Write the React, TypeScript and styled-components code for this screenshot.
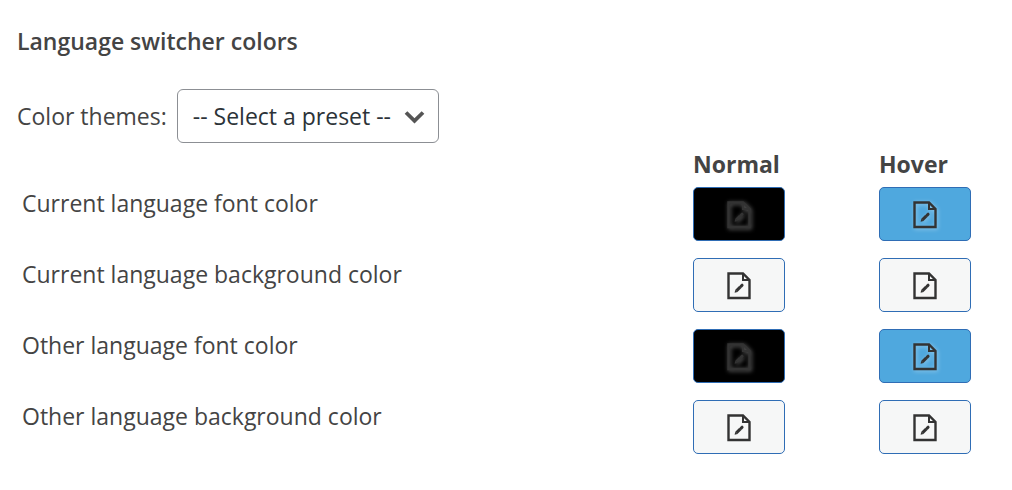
import React from 'react';
import styled, { createGlobalStyle } from 'styled-components';

const GlobalStyle = createGlobalStyle`
  *, *::before, *::after { box-sizing: border-box; }
  body {
    margin: 0;
    background: #fff;
    color: #444;
    font-family: "Open Sans", "Noto Sans", sans-serif;
    font-size: 23px;
    line-height: 32px;
  }
`;

const Panel = styled.section`
  padding: 25px 0 24px 17px;
`;

const Title = styled.h2`
  margin: 0 0 32px;
  font-size: 23px;
  font-weight: 600;
  line-height: 32px;
`;

const PresetRow = styled.div`
  display: flex;
  align-items: center;
  gap: 10px;
`;

const SelectWrap = styled.div`
  position: relative;
`;

const Select = styled.select`
  display: block;
  height: 54px;
  width: 262px;
  padding: 0 40px 0 15px;
  appearance: none;
  border: 1px solid #8c8f94;
  border-radius: 6px;
  background: #fff;
  color: #2c3338;
  font: inherit;
`;

const Chevron = styled.svg`
  position: absolute;
  top: 21px;
  right: 14px;
  pointer-events: none;
`;

const ColorTable = styled.table`
  width: 100%;
  table-layout: fixed;
  border-collapse: collapse;
`;

const HeadCell = styled.th<{ $width?: number }>`
  height: 44px;
  width: ${(p) => (p.$width ? `${p.$width}px` : 'auto')};
  padding: 5px 5px 7px;
  text-align: left;
  vertical-align: bottom;
  font-weight: 700;
`;

const RowLabel = styled.th`
  height: 71px;
  padding: 0 5px;
  vertical-align: top;
  text-align: left;
  font-weight: 400;
`;

const Cell = styled.td`
  padding: 0 5px;
  vertical-align: top;
`;

const Swatch = styled.button<{ $color: string }>`
  display: flex;
  align-items: center;
  justify-content: center;
  width: 92px;
  height: 54px;
  padding: 2px 0 0;
  border: 1px solid #2f6db5;
  border-radius: 5px;
  background: ${(p) => p.$color};
  cursor: pointer;

  svg {
    filter: drop-shadow(1px 1px 2px rgba(255, 255, 255, 0.4));
  }
`;

const EditIcon = () => (
  <svg width="24" height="28" viewBox="0 0 24 28" fill="none" aria-hidden="true">
    <path d="M1.5 1.5H16L22.5 8V26H1.5Z" stroke="#333" strokeWidth="2.4" />
    <path d="M16 1.5V8H22.5" stroke="#333" strokeWidth="2" />
    <path d="M9.4 18.9L13.4 14.9" stroke="#333" strokeWidth="3" />
    <path d="M14.2 14.1L15.1 13.2" stroke="#333" strokeWidth="3" strokeLinecap="round" />
    <path d="M7.6 20.7L8.3 17.7L10.6 20Z" fill="#333" />
  </svg>
);

const PLAIN = '#f6f7f7';
const rows = [
  { label: 'Current language font color', normal: '#000000', hover: '#4fa8de' },
  { label: 'Current language background color', normal: PLAIN, hover: PLAIN },
  { label: 'Other language font color', normal: '#000000', hover: '#4fa8de' },
  { label: 'Other language background color', normal: PLAIN, hover: PLAIN },
];

export default function App() {
  return (
    <>
      <GlobalStyle />
      <Panel>
        <Title>Language switcher colors</Title>
        <PresetRow>
          <label htmlFor="preset">Color themes:</label>
          <SelectWrap>
            <Select id="preset">
              <option>-- Select a preset --</option>
            </Select>
            <Chevron width="21" height="14" viewBox="0 0 21 14" fill="none" aria-hidden="true">
              <path d="M2 2.5L10.5 10.8L19 2.5" stroke="#555" strokeWidth="3.8" />
            </Chevron>
          </SelectWrap>
        </PresetRow>
        <ColorTable>
          <thead>
            <tr>
              <HeadCell as="td" />
              <HeadCell scope="col" $width={186}>Normal</HeadCell>
              <HeadCell scope="col" $width={138}>Hover</HeadCell>
            </tr>
          </thead>
          <tbody>
            {rows.map((row) => (
              <tr key={row.label}>
                <RowLabel scope="row">{row.label}</RowLabel>
                <Cell>
                  <Swatch type="button" aria-label={`${row.label}, normal`} $color={row.normal}>
                    <EditIcon />
                  </Swatch>
                </Cell>
                <Cell>
                  <Swatch type="button" aria-label={`${row.label}, hover`} $color={row.hover}>
                    <EditIcon />
                  </Swatch>
                </Cell>
              </tr>
            ))}
          </tbody>
        </ColorTable>
      </Panel>
    </>
  );
}
